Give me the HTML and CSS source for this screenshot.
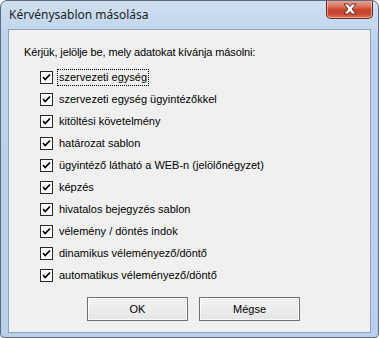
FILE: index.html
```html
<!DOCTYPE html>
<html lang="hu">
<head>
<meta charset="utf-8">
<title>Kérvénysablon másolása</title>
<link rel="stylesheet" href="styles.css">
</head>
<body>
<div class="window">
  <div class="titlebar">
    <span class="title">Kérvénysablon másolása</span>
    <div class="close">
      <svg width="16" height="12" viewBox="0 0 16 12">
        <path d="M2 1 H6 L8 3.5 L10 1 H14 L10 6 L14 11 H10 L8 8.5 L6 11 H2 L6 6 Z" fill="#fff" stroke="#5a2018" stroke-width="0.9" stroke-linejoin="round"/>
      </svg>
    </div>
  </div>
  <div class="client">
    <p class="prompt">Kérjük, jelölje be, mely adatokat kívánja másolni:</p>
    <ul class="options">
      <li class="option"><span class="box"><svg viewBox="0 0 11 11"><polyline points="2,5 4.2,7.5 9,2.5"/></svg></span><span class="label focused">szervezeti egység</span></li>
      <li class="option"><span class="box"><svg viewBox="0 0 11 11"><polyline points="2,5 4.2,7.5 9,2.5"/></svg></span><span class="label">szervezeti egység ügyintézőkkel</span></li>
      <li class="option"><span class="box"><svg viewBox="0 0 11 11"><polyline points="2,5 4.2,7.5 9,2.5"/></svg></span><span class="label">kitöltési követelmény</span></li>
      <li class="option"><span class="box"><svg viewBox="0 0 11 11"><polyline points="2,5 4.2,7.5 9,2.5"/></svg></span><span class="label">határozat sablon</span></li>
      <li class="option"><span class="box"><svg viewBox="0 0 11 11"><polyline points="2,5 4.2,7.5 9,2.5"/></svg></span><span class="label">ügyintéző látható a WEB-n (jelölőnégyzet)</span></li>
      <li class="option"><span class="box"><svg viewBox="0 0 11 11"><polyline points="2,5 4.2,7.5 9,2.5"/></svg></span><span class="label">képzés</span></li>
      <li class="option"><span class="box"><svg viewBox="0 0 11 11"><polyline points="2,5 4.2,7.5 9,2.5"/></svg></span><span class="label">hivatalos bejegyzés sablon</span></li>
      <li class="option"><span class="box"><svg viewBox="0 0 11 11"><polyline points="2,5 4.2,7.5 9,2.5"/></svg></span><span class="label">vélemény / döntés indok</span></li>
      <li class="option"><span class="box"><svg viewBox="0 0 11 11"><polyline points="2,5 4.2,7.5 9,2.5"/></svg></span><span class="label">dinamikus véleményező/döntő</span></li>
      <li class="option"><span class="box"><svg viewBox="0 0 11 11"><polyline points="2,5 4.2,7.5 9,2.5"/></svg></span><span class="label">automatikus véleményező/döntő</span></li>
    </ul>
    <div class="buttons">
      <button class="btn">OK</button>
      <button class="btn">Mégse</button>
    </div>
  </div>
</div>
</body>
</html>
```
FILE: styles.css
```css
html, body {
  margin: 0;
  padding: 0;
  background: #ffffff;
}
.window {
  width: 379px;
  height: 338px;
  box-sizing: border-box;
  border: 1px solid #5c6b80;
  border-radius: 7px 7px 4px 4px;
  background: linear-gradient(#cfdff1, #bcd2ec 40px, #b9cfea);
  display: flex;
  flex-direction: column;
  overflow: hidden;
}
.titlebar {
  height: 28px;
  display: flex;
  align-items: flex-start;
  justify-content: space-between;
  flex-shrink: 0;
}
.title {
  font-family: "Noto Sans", "DejaVu Sans", sans-serif;
  font-size: 12px;
  color: #1e1e1e;
  margin: 6px 0 0 8px;
  line-height: 16px;
}
.close {
  width: 47px;
  height: 19px;
  margin-right: 5px;
  margin-top: -1px;
  box-sizing: border-box;
  border: 1px solid #6b2b22;
  border-top: none;
  border-radius: 0 0 5px 5px;
  background: linear-gradient(#e9ab9b, #d8745e 35%, #c5432c 55%, #c94a33 80%, #dc7a5e);
  display: flex;
  align-items: center;
  justify-content: center;
  box-shadow: inset 0 0 0 1px rgba(255, 220, 210, 0.5);
}
.close svg {
  display: block;
}
.client {
  flex: 1;
  margin: 0 7px 4px 7px;
  border: 1px solid #90a3bb;
  background: #f0f0f0;
  padding: 16px 0 0 15px;
  font-family: "Liberation Sans", Arial, sans-serif;
  font-size: 11px;
  color: #000;
}
.prompt {
  margin: 0;
  line-height: 13px;
  letter-spacing: -0.12px;
}
.options {
  list-style: none;
  margin: 7px 0 0 0;
  padding: 0 0 0 16px;
}
.option {
  height: 22px;
  display: flex;
  align-items: center;
}
.box {
  width: 13px;
  height: 13px;
  box-sizing: border-box;
  border: 1px solid #2a2a2a;
  background: #fff;
  display: flex;
  flex-shrink: 0;
}
.box svg {
  width: 11px;
  height: 11px;
}
.box polyline {
  fill: none;
  stroke: #000;
  stroke-width: 1.7;
}
.label {
  margin-left: 4px;
  padding: 1px 1px;
  line-height: 13px;
  border: 1px dotted transparent;
}
.label.focused {
  border-color: #000;
}
.buttons {
  display: flex;
  gap: 11px;
  margin-top: 11px;
  padding-left: 63px;
}
.btn {
  width: 101px;
  height: 24px;
  box-sizing: border-box;
  border: 1px solid #707070;
  background: linear-gradient(#f3f3f3, #e6e6e6);
  box-shadow: inset 0 0 0 1px #fbfbfb;
  font-family: "Liberation Sans", Arial, sans-serif;
  font-size: 11px;
  color: #000;
  padding: 0;
}
```
